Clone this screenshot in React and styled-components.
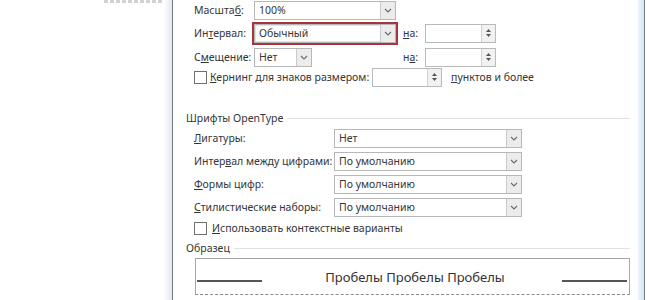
import styled, { createGlobalStyle } from "styled-components"

const Global = createGlobalStyle`
  body {
    margin: 0;
    background: #fff;
  }
`

const Screen = styled.div`
  display: flex;
  width: 660px;
  height: 300px;
  overflow: hidden;
  background: #fff;
  font-family: "Noto Sans", "Open Sans", sans-serif;
  font-size: 10.5px;
  color: #353535;
`

const DocArea = styled.div`
  width: 165px;
  flex: none;
  overflow: hidden;
`

const DocMarks = styled.div`
  margin: 0 0 0 104px;
  width: 58px;
  height: 3px;
  background: repeating-linear-gradient(to right, #d2d2d2 0 4px, transparent 4px 6px);
`

const LeftFrame = styled.div`
  width: 7px;
  flex: none;
  background: linear-gradient(to right, #fbfbfc, #e3e8ee);
  border-right: 1px solid #6e7b88;
`

const RightFrame = styled.div`
  width: 6px;
  flex: none;
  background: linear-gradient(to right, #eef5fb, #d5e6f4);
  border-right: 1px solid #6f7f8e;
`

const Dialog = styled.div`
  width: 465px;
  flex: none;
  box-sizing: border-box;
  padding: 0 8px 0 13px;
  display: flex;
  flex-direction: column;
`

const Rows = styled.div`
  display: flex;
  flex-direction: column;
  padding-left: 8px;
`

const Row = styled.div`
  display: flex;
  align-items: center;
  height: 20px;
  margin-top: ${(p) => p.$mt || 0}px;
`

const Label = styled.span`
  width: ${(p) => p.$w}px;
  flex: none;
  white-space: nowrap;
`

const Cell = styled.div`
  width: ${(p) => p.$w}px;
  flex: none;
  display: flex;
`

const SelectBox = styled.div`
  width: ${(p) => p.$w}px;
  height: 19px;
  box-sizing: border-box;
  border: 1px solid #b5b7bb;
  background: #fff;
  display: flex;
  align-items: center;
  ${(p) =>
    p.$alert &&
    `
    outline: 2px solid #a9343b;
    outline-offset: 0;
    box-shadow: 0 0 0 1px #f1c4c6, inset 0 0 0 1px #f6dadb;
  `}
`

const SelectValue = styled.span`
  flex: 1;
  padding-left: 4px;
  white-space: nowrap;
  overflow: hidden;
`

const ArrowButton = styled.span`
  width: 15px;
  height: 100%;
  flex: none;
  box-sizing: border-box;
  border-left: 1px solid #c9cacd;
  background: #ececec;
  display: flex;
  align-items: center;
  justify-content: center;
`

const SpinBox = styled.div`
  width: ${(p) => p.$w}px;
  height: 19px;
  box-sizing: border-box;
  border: 1px solid #b8babe;
  background: #fff;
  display: flex;
  justify-content: flex-end;
`

const SpinButtons = styled.span`
  width: 14px;
  box-sizing: border-box;
  border-left: 1px solid #cfd0d2;
  background: #f1f1f1;
  display: flex;
  flex-direction: column;
  align-items: center;
  justify-content: center;
  gap: 2px;
`

const CheckBox = styled.span`
  width: 11px;
  height: 11px;
  flex: none;
  border: 1px solid #707070;
  background: #fff;
  margin-right: ${(p) => p.$mr || 3}px;
`

const Plain = styled.span`
  white-space: nowrap;
  margin-left: ${(p) => p.$ml || 0}px;
`

const SectionHead = styled.div`
  display: flex;
  align-items: center;
  height: 16px;
  margin-top: ${(p) => p.$mt}px;
  white-space: nowrap;
  &::after {
    content: "";
    flex: 1;
    height: 1px;
    margin-left: 4px;
    background: #e1e1e1;
  }
`

const Preview = styled.div`
  margin: 2px 0 0 9px;
  height: 37px;
  box-sizing: border-box;
  border: 1px solid #a6a6a6;
  border-bottom: 1px dashed #8a8a8a;
  display: flex;
  align-items: center;
  padding: 0 2px 0 1px;
`

const Rule = styled.span`
  width: 65px;
  height: 2px;
  flex: none;
  background: #555;
  margin-top: 8px;
`

const Sample = styled.span`
  flex: 1;
  text-align: center;
  font-size: 13px;
  color: #333;
  padding-left: 6px;
`

const Chevron = () => (
  <svg width="8" height="5" viewBox="0 0 8 5">
    <path d="M1 1 L4 4 L7 1" fill="none" stroke="#6a6a6a" strokeWidth="1.1" />
  </svg>
)

const Tri = ({ up }) => (
  <svg width="5" height="3" viewBox="0 0 5 3">
    <path d={up ? "M0 3 L2.5 0 L5 3Z" : "M0 0 L2.5 3 L5 0Z"} fill="#555" />
  </svg>
)

const Select = ({ w, value, alert }) => (
  <SelectBox $w={w} $alert={alert}>
    <SelectValue>{value}</SelectValue>
    <ArrowButton>
      <Chevron />
    </ArrowButton>
  </SelectBox>
)

const Spin = ({ w }) => (
  <SpinBox $w={w}>
    <SpinButtons>
      <Tri up />
      <Tri />
    </SpinButtons>
  </SpinBox>
)

const openType = [
  { label: <><u>Л</u>игатуры:</>, value: "Нет" },
  { label: <>Интер<u>в</u>ал между цифрами:</>, value: "По умолчанию" },
  { label: <><u>Ф</u>ормы цифр:</>, value: "По умолчанию" },
  { label: <><u>С</u>тилистические наборы:</>, value: "По умолчанию" },
]

export default function App() {
  return (
    <Screen>
      <Global />
      <DocArea>
        <DocMarks />
      </DocArea>
      <LeftFrame />
      <Dialog>
        <Rows>
          <Row>
            <Label $w={60}>Масшта<u>б</u>:</Label>
            <Select w={142} value="100%" />
          </Row>
          <Row $mt={3}>
            <Label $w={60}>Ин<u>т</u>ервал:</Label>
            <Cell $w={149}>
              <Select w={142} value="Обычный" alert />
            </Cell>
            <Label $w={22}><u>н</u>а:</Label>
            <Spin w={71} />
          </Row>
          <Row $mt={4}>
            <Label $w={60}>С<u>м</u>ещение:</Label>
            <Cell $w={149}>
              <Select w={58} value="Нет" />
            </Cell>
            <Label $w={22}>н<u>а</u>:</Label>
            <Spin w={71} />
          </Row>
          <Row $mt={0}>
            <CheckBox />
            <Label $w={162}><u>К</u>ернинг для знаков размером:</Label>
            <Spin w={70} />
            <Plain $ml={9}><u>п</u>унктов и более</Plain>
          </Row>
        </Rows>

        <SectionHead $mt={23}>Шрифты OpenType</SectionHead>
        <Rows>
          {openType.map((r, i) => (
            <Row key={i} $mt={i === 0 ? 2 : 3}>
              <Label $w={140}>{r.label}</Label>
              <Select w={188} value={r.value} />
            </Row>
          ))}
          <Row $mt={1}>
            <CheckBox $mr={5} />
            <Plain><u>И</u>спользовать контекстные варианты</Plain>
          </Row>
        </Rows>

        <SectionHead $mt={2}>Образец</SectionHead>
        <Preview>
          <Rule />
          <Sample>Пробелы Пробелы Пробелы</Sample>
          <Rule />
        </Preview>
      </Dialog>
      <RightFrame />
    </Screen>
  )
}
